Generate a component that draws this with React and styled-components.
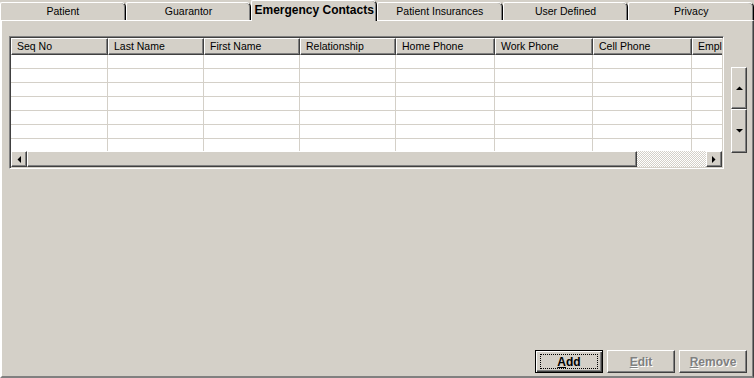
import React from "react";
import styled, { createGlobalStyle, css } from "styled-components";

const GlobalStyle = createGlobalStyle`
  html, body {
    margin: 0;
    padding: 0;
    background: #d4d0c8;
  }
  body {
    font-family: "Liberation Sans", Arial, sans-serif;
    font-size: 10.5px;
    color: #000;
  }
`;

const tabs = [
  "Patient",
  "Guarantor",
  "Emergency Contacts",
  "Patient Insurances",
  "User Defined",
  "Privacy",
];

const columns = [
  { title: "Seq No", width: 97 },
  { title: "Last Name", width: 96 },
  { title: "First Name", width: 96 },
  { title: "Relationship", width: 96 },
  { title: "Home Phone", width: 99 },
  { title: "Work Phone", width: 98 },
  { title: "Cell Phone", width: 99 },
  { title: "Employer", width: 97 },
];

const rows = [0, 1, 2, 3, 4, 5, 6];

const raised = css`
  border-top: 1px solid #fff;
  border-left: 1px solid #fff;
  border-right: 1px solid #404040;
  border-bottom: 1px solid #404040;
  box-shadow: inset -1px -1px 0 #808080;
`;

const Window = styled.div`
  width: 754px;
  height: 378px;
  display: flex;
  flex-direction: column;
  background: #d4d0c8;
  overflow: hidden;
`;

const TabStrip = styled.div`
  display: flex;
  align-items: flex-end;
  height: 20px;
  position: relative;
  z-index: 1;
`;

const Tab = styled.div`
  flex: 1;
  height: ${(p) => (p.$active ? "21px" : "18px")};
  margin-bottom: ${(p) => (p.$active ? "-1px" : "0")};
  box-sizing: border-box;
  display: flex;
  align-items: center;
  justify-content: center;
  background: #d4d0c8;
  border-left: 1px solid #fff;
  border-top: 1px solid #fff;
  border-right: 1px solid #000;
  border-top-left-radius: 2px;
  border-top-right-radius: 5px;
  box-shadow: inset -1px 0 0 #808080;
  font-size: ${(p) => (p.$active ? "12px" : "10.5px")};
  font-weight: ${(p) => (p.$active ? "bold" : "normal")};
  padding-bottom: ${(p) => (p.$active ? "3px" : "1px")};
  white-space: nowrap;
`;

const Panel = styled.div`
  flex: 1;
  display: flex;
  flex-direction: column;
  box-sizing: border-box;
  border-top: 1px solid #fff;
  border-left: 2px solid #fff;
  border-right: 1px solid #404040;
  border-bottom: 2px solid #808080;
  box-shadow: inset -1px 0 0 #808080;
  padding: 15px 6px 3px 7px;
`;

const GridArea = styled.div`
  display: flex;
  gap: 7px;
`;

const Grid = styled.div`
  width: 716px;
  height: 133px;
  box-sizing: border-box;
  border-top: 1px solid #808080;
  border-left: 1px solid #808080;
  border-right: 1px solid #fff;
  border-bottom: 1px solid #fff;
  box-shadow: inset 1px 1px 0 #404040, inset -1px -1px 0 #d4d0c8;
  padding: 1px;
  display: flex;
  flex-direction: column;
  overflow: hidden;
`;

const HeaderRow = styled.div`
  display: flex;
  height: 17px;
  flex-shrink: 0;
  overflow: hidden;
`;

const HeaderCell = styled.div`
  flex: 0 0 auto;
  box-sizing: border-box;
  height: 17px;
  ${raised};
  padding: 1px 0 0 5px;
  white-space: nowrap;
  overflow: hidden;
  background: #d4d0c8;
`;

const Body = styled.div`
  flex: 1;
  background: #fff;
  overflow: hidden;
`;

const DataRow = styled.div`
  display: flex;
  height: 14px;
  box-sizing: border-box;
  border-bottom: 1px solid #d4d0c8;
`;

const DataCell = styled.div`
  flex: 0 0 auto;
  box-sizing: border-box;
  border-right: 1px solid #d4d0c8;
`;

const HScroll = styled.div`
  display: flex;
  height: 16px;
  flex-shrink: 0;
`;

const ScrollButton = styled.div`
  width: 16px;
  height: 16px;
  box-sizing: border-box;
  background: #d4d0c8;
  ${raised};
  display: flex;
  align-items: center;
  justify-content: center;
`;

const Thumb = styled.div`
  width: 610px;
  height: 16px;
  box-sizing: border-box;
  background: #d4d0c8;
  ${raised};
`;

const Track = styled.div`
  flex: 1;
  background-color: #fff;
  background-image: linear-gradient(45deg, #d4d0c8 25%, transparent 25%, transparent 75%, #d4d0c8 75%),
    linear-gradient(45deg, #d4d0c8 25%, transparent 25%, transparent 75%, #d4d0c8 75%);
  background-size: 2px 2px;
  background-position: 0 0, 1px 1px;
`;

const SideButtons = styled.div`
  display: flex;
  flex-direction: column;
  margin-top: 31px;
`;

const SideButton = styled.div`
  width: 16px;
  height: ${(p) => p.$h}px;
  box-sizing: border-box;
  background: #d4d0c8;
  ${raised};
  display: flex;
  align-items: center;
  justify-content: center;
`;

const Spacer = styled.div`
  flex: 1;
`;

const ButtonRow = styled.div`
  display: flex;
  justify-content: flex-end;
  gap: 4px;
`;

const Button = styled.div`
  width: ${(p) => p.$w}px;
  height: 23px;
  box-sizing: border-box;
  background: #d4d0c8;
  display: flex;
  align-items: center;
  justify-content: center;
  font-weight: bold;
  font-size: 12px;
  position: relative;
  ${(p) =>
    p.$default
      ? css`
          border: 1px solid #000;
          box-shadow: inset 1px 1px 0 #fff, inset -1px -1px 0 #404040, inset -2px -2px 0 #808080;
        `
      : css`
          ${raised};
        `}
  color: ${(p) => (p.$disabled ? "#808080" : "#000")};
  text-shadow: ${(p) => (p.$disabled ? "1px 1px 0 #fff" : "none")};
`;

const Focus = styled.div`
  position: absolute;
  inset: 3px 4px;
  border: 1px dotted #000;
`;

const Key = styled.span`
  text-decoration: underline;
`;

const Arrow = ({ dir }) => {
  const pts = {
    up: "0,4 7,4 3.5,0.5",
    down: "0,0 7,0 3.5,3.5",
    left: "4,0 4,7 0.5,3.5",
    right: "0,0 0,7 3.5,3.5",
  }[dir];
  const vertical = dir === "up" || dir === "down";
  return (
    <svg width={vertical ? 7 : 4} height={vertical ? 4 : 7} viewBox={vertical ? "0 0 7 4" : "0 0 4 7"}>
      <polygon points={pts} fill="#000" />
    </svg>
  );
};

export default function App() {
  return (
    <Window>
      <GlobalStyle />
      <TabStrip>
        {tabs.map((t, i) => (
          <Tab key={t} $active={i === 2}>
            {t}
          </Tab>
        ))}
      </TabStrip>
      <Panel>
        <GridArea>
          <Grid>
            <HeaderRow>
              {columns.map((c) => (
                <HeaderCell key={c.title} style={{ width: c.width }}>
                  {c.title}
                </HeaderCell>
              ))}
            </HeaderRow>
            <Body>
              {rows.map((r) => (
                <DataRow key={r}>
                  {columns.map((c) => (
                    <DataCell key={c.title} style={{ width: c.width }} />
                  ))}
                </DataRow>
              ))}
            </Body>
            <HScroll>
              <ScrollButton>
                <Arrow dir="left" />
              </ScrollButton>
              <Thumb />
              <Track />
              <ScrollButton>
                <Arrow dir="right" />
              </ScrollButton>
            </HScroll>
          </Grid>
          <SideButtons>
            <SideButton $h={42}>
              <Arrow dir="up" />
            </SideButton>
            <SideButton $h={44}>
              <Arrow dir="down" />
            </SideButton>
          </SideButtons>
        </GridArea>
        <Spacer />
        <ButtonRow>
          <Button $w={68} $default>
            <Focus />
            <Key>A</Key>dd
          </Button>
          <Button $w={68} $disabled>
            <Key>E</Key>dit
          </Button>
          <Button $w={68} $disabled>
            <Key>R</Key>emove
          </Button>
        </ButtonRow>
      </Panel>
    </Window>
  );
}
